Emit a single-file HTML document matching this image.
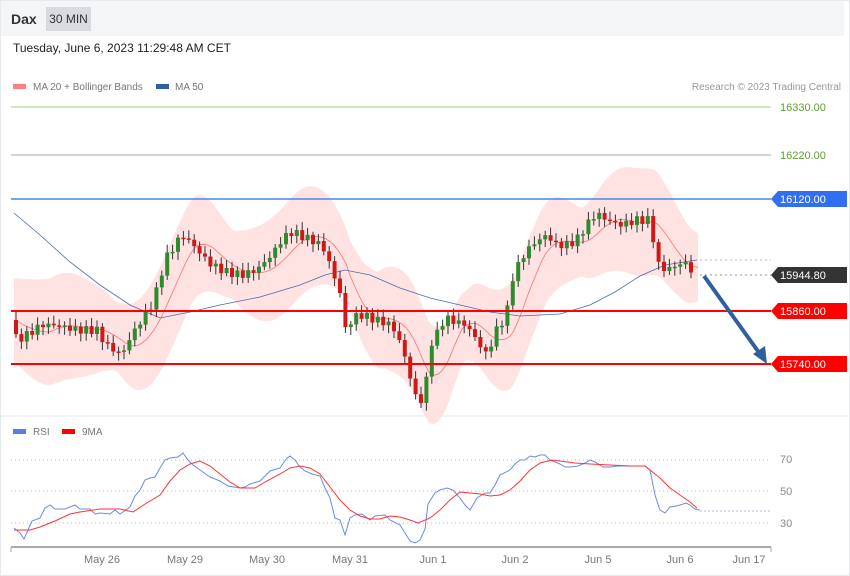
<!DOCTYPE html>
<html><head><meta charset="utf-8"><style>
body{margin:0;width:850px;height:576px;background:#fff;font-family:"Liberation Sans",sans-serif;overflow:hidden;position:relative}
.wrap{position:absolute;left:0;top:0;width:848px;height:574px;border:1px solid #e6e9ee}
.topbar{position:absolute;left:1px;top:1px;width:843px;height:35px;background:#f4f5f7}
.dax{position:absolute;left:10px;top:10px;font-size:14px;font-weight:bold;color:#333}
.tf{position:absolute;left:45px;top:6px;width:45px;height:24px;background:#d8dbe0;font-size:12px;color:#333;line-height:24px;text-align:center}
.date{position:absolute;left:13px;top:41px;font-size:12px;color:#222}
svg{position:absolute;left:0;top:0}
</style></head><body>
<div class="wrap"></div>
<div class="topbar"><div class="dax">Dax</div><div class="tf">30 MIN</div></div>
<div class="date">Tuesday, June 6, 2023 11:29:48 AM CET</div>
<svg width="850" height="576" id="s" font-family="Liberation Sans, sans-serif">
<rect x="13" y="84" width="13" height="5" fill="#ff8080"/>
<text x="33" y="90" font-size="10" fill="#777">MA 20 + Bollinger Bands</text>
<rect x="156" y="84" width="13" height="5" fill="#2f5f9f"/>
<text x="175" y="90" font-size="10" fill="#777">MA 50</text>
<text x="841" y="90" font-size="10" fill="#999" text-anchor="end">Research © 2023 Trading Central</text>
<line x1="1" y1="416" x2="848" y2="416" stroke="#e6e9ee"/>
<line x1="11" y1="107" x2="771" y2="107" stroke="#9fce7f"/>
<text x="780" y="111" font-size="11" fill="#5aa02c">16330.00</text>
<line x1="11" y1="155" x2="771" y2="155" stroke="#aaa"/>
<text x="780" y="159" font-size="11" fill="#5aa02c">16220.00</text>
<g id="bands"></g>
<line x1="11" y1="199" x2="771" y2="199" stroke="#4a86e8" stroke-width="1.5"/>
<line x1="11" y1="311" x2="771" y2="311" stroke="#f00" stroke-width="2"/>
<line x1="11" y1="364" x2="771" y2="364" stroke="#f00" stroke-width="2"/>
<line x1="700" y1="260" x2="771" y2="260" stroke="#aab8e0" stroke-dasharray="2,3"/>
<line x1="700" y1="275" x2="771" y2="275" stroke="#999" stroke-dasharray="2,3"/>
<polygon points="771,199 778,191 847,191 847,207 778,207" fill="#2f6ff0"/>
<text x="780" y="203" font-size="11" fill="#fff">16120.00</text>
<polygon points="771,275 778,267 847,267 847,283 778,283" fill="#333"/>
<text x="780" y="279" font-size="11" fill="#fff">15944.80</text>
<polygon points="771,311 778,303 847,303 847,319 778,319" fill="#f00"/>
<text x="780" y="315" font-size="11" fill="#fff">15860.00</text>
<polygon points="771,364 778,356 847,356 847,372 778,372" fill="#f00"/>
<text x="780" y="368" font-size="11" fill="#fff">15740.00</text>
<line x1="704" y1="276" x2="760" y2="354" stroke="#2f5f9f" stroke-width="4"/>
<polygon points="767,364 753,354 765,346" fill="#2f5f9f"/>
<rect x="13" y="429" width="13" height="5" fill="#5b7fe0"/>
<text x="33" y="435" font-size="10" fill="#777">RSI</text>
<rect x="62" y="429" width="13" height="5" fill="#f00"/>
<text x="82" y="435" font-size="10" fill="#777">9MA</text>
<g stroke="#bbb" stroke-dasharray="1,3"><line x1="11" y1="460" x2="771" y2="460"/><line x1="11" y1="491" x2="771" y2="491"/><line x1="11" y1="523" x2="771" y2="523"/></g>
<g font-size="11" fill="#888"><text x="780" y="463">70</text><text x="780" y="495">50</text><text x="780" y="527">30</text></g>
<polyline fill="none" stroke="#6a8ae8" stroke-width="1" points="14,528 20,533 24,539 32,521 40,518 45,508 50,505 55,509 65,509 70,507 75,505 80,509 90,509 95,514 100,513 110,514 115,510 120,514 130,507 135,496 140,490 145,480 150,478 155,477 160,468 165,460 170,458 178,457 183,453 188,460 193,465 200,470 210,477 220,481 228,486 240,488 245,487 250,484 260,481 270,471 280,468 287,458 290,456 295,460 300,467 305,471 312,474 320,476 325,488 330,498 335,518 340,520 345,535 350,518 355,515 362,514 370,520 375,516 385,515 390,520 400,525 405,533 410,541 415,543 420,540 425,529 428,504 435,493 440,490 447,488 453,490 460,498 465,505 470,510 477,498 485,493 490,493 495,485 500,475 510,470 515,464 520,460 525,460 530,456 535,457 540,455 545,455 550,460 555,462 560,464 565,467 570,467 578,466 583,464 590,460 595,462 603,467 610,467 618,466 630,466 640,466 645,466 650,470 655,495 660,510 665,513 670,507 676,506 680,505 686,503 690,505 695,509 700,510"/>
<line x1="700" y1="511" x2="771" y2="511" stroke="#aab8e0" stroke-dasharray="2,2"/>
<polyline fill="none" stroke="#f33" stroke-width="1" points="14,530 30,530 40,527 55,521 70,514 80,512 100,509 120,509 133,512 145,504 160,495 170,481 180,470 190,464 200,461 210,466 220,474 230,482 240,488 255,488 265,482 280,474 290,468 300,466 310,468 320,474 330,487 340,500 350,510 360,516 370,519 380,519 390,516 400,517 410,520 418,523 430,518 440,510 450,500 460,492 470,493 480,494 490,496 500,495 510,490 520,481 530,470 540,463 552,460 560,461 575,463 590,464 610,465 630,466 645,466 660,478 670,488 680,495 690,502 697,508"/>
<line x1="11" y1="547" x2="771" y2="547" stroke="#aaa" stroke-width="2"/>
<line x1="11" y1="547" x2="11" y2="552" stroke="#aaa"/><line x1="771" y1="547" x2="771" y2="552" stroke="#aaa"/>
<g font-size="11" fill="#777" text-anchor="middle"><text x="102" y="563">May 26</text><text x="185" y="563">May 29</text><text x="267" y="563">May 30</text><text x="350" y="563">May 31</text><text x="433" y="563">Jun 1</text><text x="515" y="563">Jun 2</text><text x="598" y="563">Jun 5</text><text x="680" y="563">Jun 6</text><text x="749" y="563">Jun 17</text></g>
</svg>
<script>
(function(){
var K=[[14,320],[20,340],[30,335],[45,325],[60,325],[80,330],[100,330],[110,345],[125,355],[135,335],[145,320],[155,305],[162,285],[168,260],[175,250],[185,235],[195,243],[205,255],[215,265],[230,272],[245,275],[260,270],[275,255],[285,240],[295,232],[310,238],[325,245],[332,260],[340,285],[345,295],[350,340],[355,318],[365,315],[380,320],[395,325],[405,345],[413,375],[420,400],[428,400],[433,345],[440,335],[448,318],[460,322],[470,325],[480,340],[490,355],[500,330],[510,315],[515,280],[525,258],[535,245],[550,235],[560,245],[570,245],[580,240],[590,225],[600,213],[610,220],[625,225],[640,220],[652,220],[657,240],[662,265],[670,270],[680,265],[690,263],[697,275]];
function f(x){for(var i=1;i<K.length;i++)if(x<=K[i][0]){var a=K[i-1],b=K[i];return a[1]+(b[1]-a[1])*(x-a[0])/(b[0]-a[0]);}return 275;}
var g=document.getElementById('bands'),h='';
var ma='';
function sm(x){var s=0;for(var d=-30;d<=0;d+=3)s+=f(Math.max(14,x+d));return s/11;}
var U=[],L=[];
for(var x=14;x<=698;x+=4){var m=sm(x),w=34+20*Math.abs(Math.sin(x/37));U.push(x+','+(m-w).toFixed(1));L.push(x+','+(m+w).toFixed(1));ma+=x+','+m.toFixed(1)+' ';}
h+='<polygon fill="#ffe3e3" points="'+U.join(' ')+' '+L.slice().reverse().join(' ')+'"/>';
h+='<polyline fill="none" stroke="#ff7070" stroke-width="0.8" points="'+ma+'"/>';
var B=[[14,213],[40,235],[70,262],[100,285],[130,305],[160,318],[190,312],[220,305],[260,297],[300,285],[325,275],[345,270],[370,275],[400,288],[430,298],[460,305],[490,312],[520,316],[560,314],[590,305],[615,292],[640,276],[665,265],[697,260]];
h+='<polyline fill="none" stroke="#4a6aa8" stroke-width="0.8" points="'+B.map(function(p){return p.join(',')}).join(' ')+'"/>';
var prev=f(14);
for(var x=14;x<=694;x+=5.4){var c=f(x+5.4)+Math.sin(x*1.7)*4,o=prev,tp=Math.min(o,c),bt=Math.max(o,c);if(bt-tp<1.5)bt=tp+1.5;var col=c<o?'#2e8b2e':'#d01818';
h+='<line x1="'+(x+2)+'" y1="'+(tp-3-Math.abs(Math.sin(x))*5)+'" x2="'+(x+2)+'" y2="'+(bt+3+Math.abs(Math.cos(x))*5)+'" stroke="#333" stroke-width="1"/>';
h+='<rect x="'+x+'" y="'+tp+'" width="4" height="'+(bt-tp)+'" fill="'+col+'"/>';prev=c;}
g.innerHTML=h;
})();
</script>
</body></html>
